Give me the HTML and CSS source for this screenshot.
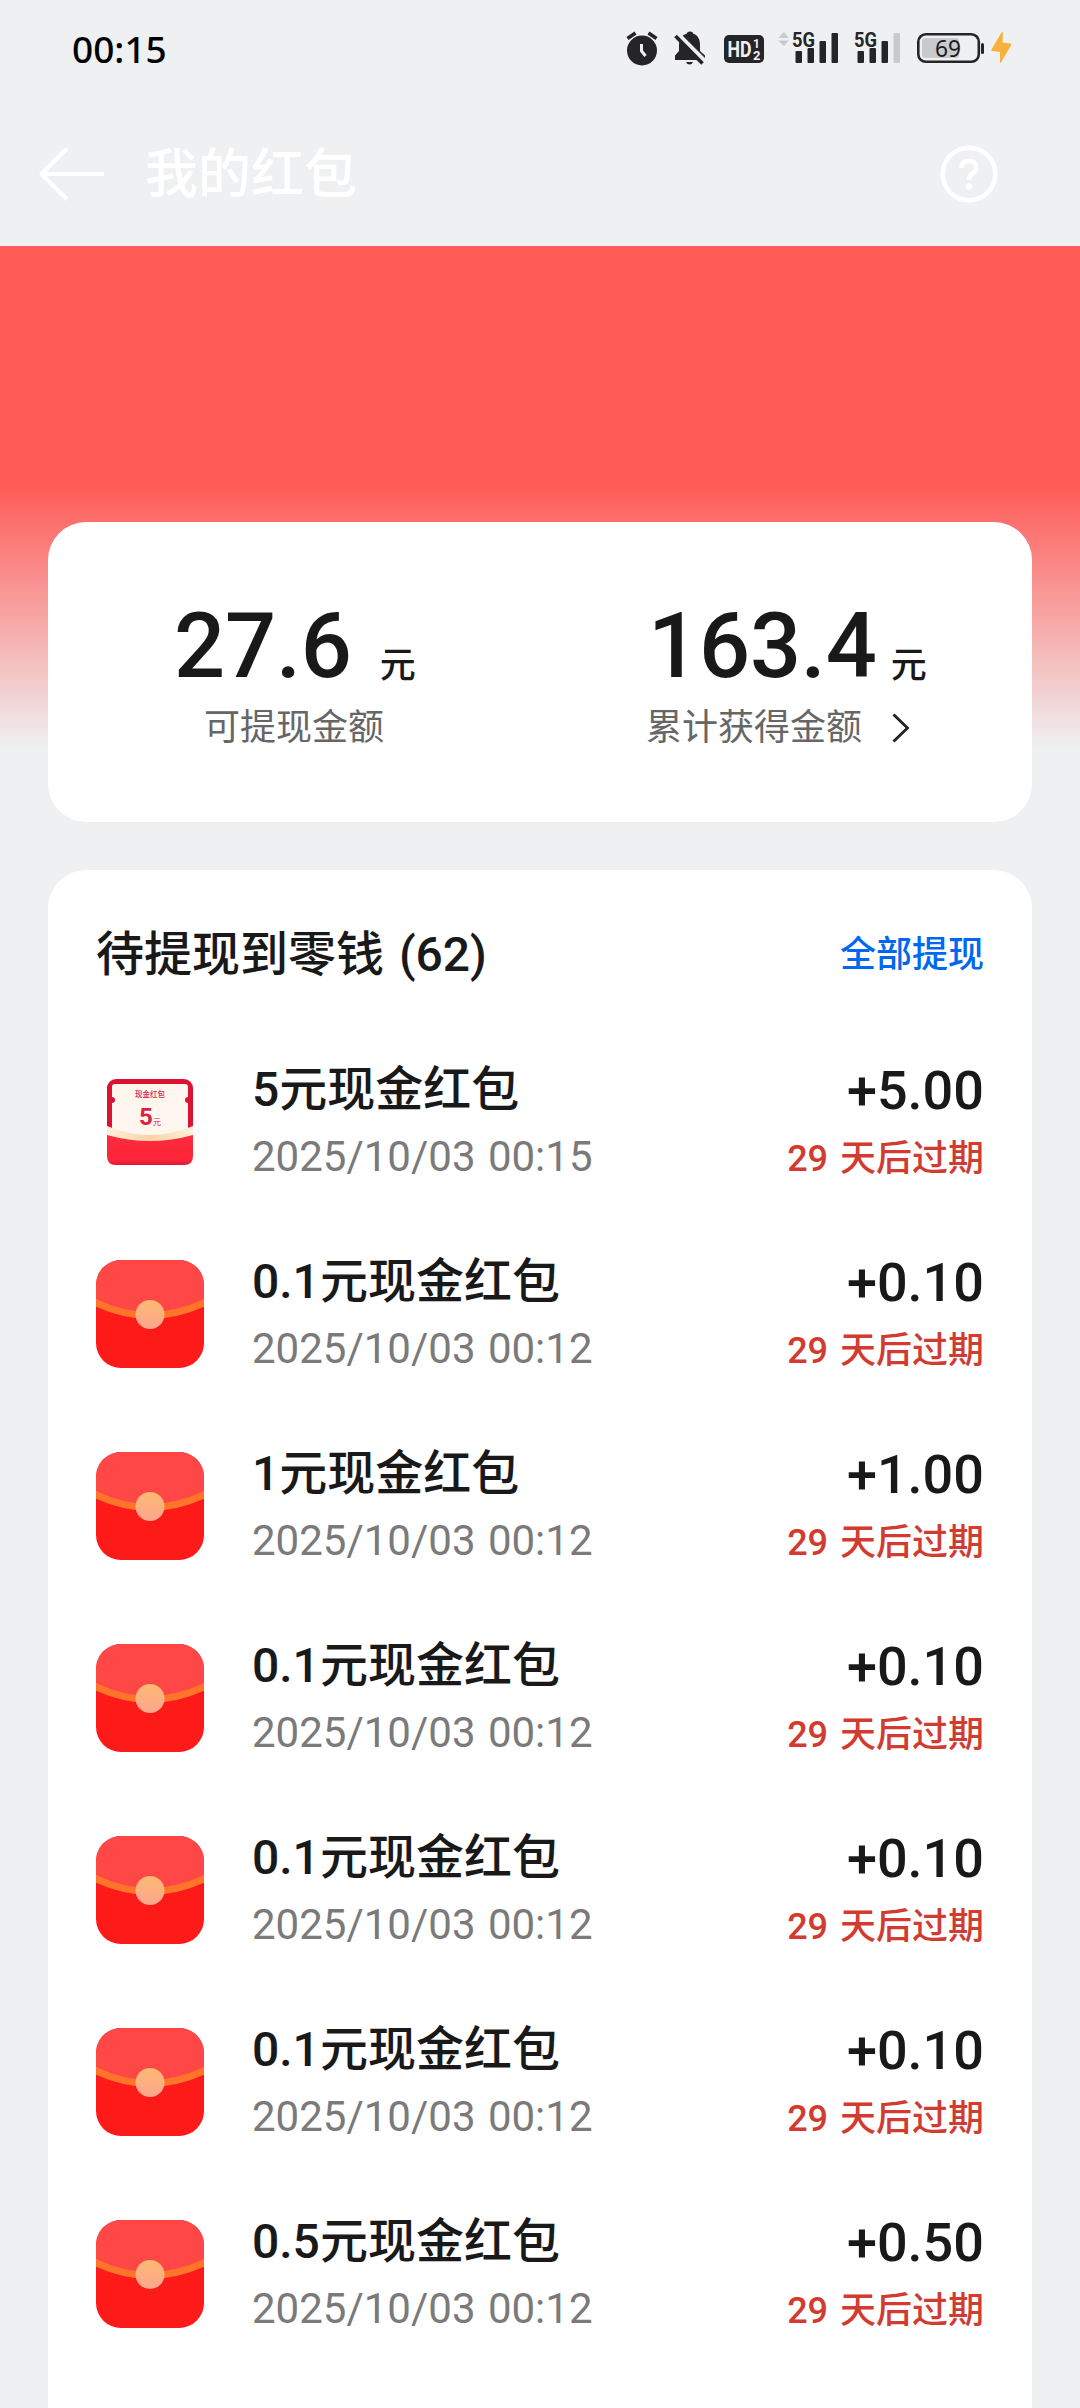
FILE: index.html
```
<!DOCTYPE html>
<html lang="zh-CN">
<head>
<meta charset="utf-8">
<title>我的红包</title>
<link rel="stylesheet" href="styles.css">
</head>
<body>
<svg class="defs" aria-hidden="true">
  <defs>
    <linearGradient id="coin" x1="0" y1="0" x2="0" y2="1">
      <stop offset="0" stop-color="#ffba70"/>
      <stop offset="1" stop-color="#fba690"/>
    </linearGradient>
    <clipPath id="tile"><rect width="108" height="108" rx="25"/></clipPath>
    <symbol id="envelope" viewBox="0 0 108 108">
      <g clip-path="url(#tile)">
        <rect width="108" height="108" fill="#ff1a1a"/>
        <path d="M0 0H108V42Q54 72 0 42Z" fill="#ff4845"/>
        <path d="M-2 42Q54 69 110 42" fill="none" stroke="#ff742b" stroke-width="7"/>
      </g>
      <circle cx="54" cy="54.500" r="14.500" fill="url(#coin)"/>
    </symbol>
  </defs>
</svg>

<header class="top">
  <div class="status">
    <span class="clock">00:15</span>
    <div class="status-icons">
      <svg class="alarm" width="32" height="36" viewBox="0 0 32 36">
        <circle cx="16" cy="20.500" r="15" fill="#252527"/>
        <path d="M1.500 8.500L9.500 3M30.500 8.500L22.500 3" stroke="#252527" stroke-width="3.600"/>
        <path d="M15.500 14V21L19.500 26" fill="none" stroke="#eff0f2" stroke-width="3"/>
      </svg>
      <svg class="bell" width="32" height="36" viewBox="0 0 32 36">
        <path d="M13 3.500Q13 1.500 16 1.500Q19 1.500 19 3.500Q26 6 26 14V21L31 25.500V30H1V25.500L5 21V14Q5 6 13 3.500Z" fill="#252527"/>
        <path d="M12 32H19Q18 34.500 15.500 34.500Q13 34.500 12 32Z" fill="#252527"/>
        <path d="M4 4L32 32" stroke="#eff0f2" stroke-width="4"/>
        <path d="M1.500 6L28.500 33.500" stroke="#252527" stroke-width="3.600"/>
      </svg>
      <svg class="hd" width="40" height="36" viewBox="0 0 40 36">
        <rect y="5" width="40" height="28" rx="5" fill="#252527"/>
        <g fill="#eff0f2" font-family="Roboto, sans-serif" font-weight="700">
          <text x="3.500" y="27.200" font-size="22.500" textLength="24" lengthAdjust="spacingAndGlyphs">HD</text>
          <text x="29" y="18" font-size="12">1</text>
          <text x="29" y="29.500" font-size="13">2</text>
        </g>
      </svg>
      <svg class="signal" width="61" height="36" viewBox="0 0 61 36">
        <path d="M0 8L6 2L11 8ZM0 10.500H11L6 16Z" fill="#c9cacc"/>
        <text x="14" y="16.500" font-family="Roboto, sans-serif" font-weight="700" font-size="21" fill="#252527" textLength="23" lengthAdjust="spacingAndGlyphs">5G</text>
        <g fill="#252527">
          <rect x="17.500" y="21" width="6.500" height="12" rx="1"/>
          <rect x="29.500" y="18" width="6.500" height="15" rx="1"/>
          <rect x="41.500" y="11" width="6.500" height="22" rx="1"/>
          <rect x="53.500" y="3" width="6.500" height="30" rx="1"/>
        </g>
      </svg>
      <svg class="signal-two" width="48" height="36" viewBox="0 0 48 36">
        <text x="0" y="16.500" font-family="Roboto, sans-serif" font-weight="700" font-size="21" fill="#252527" textLength="23" lengthAdjust="spacingAndGlyphs">5G</text>
        <g fill="#252527">
          <rect x="3.500" y="21" width="6.500" height="12" rx="1"/>
          <rect x="15.500" y="18" width="6.500" height="15" rx="1"/>
          <rect x="27.500" y="11" width="6.500" height="22" rx="1"/>
          <rect x="39.500" y="3" width="6.500" height="30" rx="1" fill="#c9cacc"/>
        </g>
      </svg>
      <svg class="battery" width="68" height="36" viewBox="0 0 68 36">
        <rect x="1.300" y="4.300" width="60.500" height="27.500" rx="7.500" fill="none" stroke="#252527" stroke-width="2.600"/>
        <rect x="5" y="8" width="37" height="20" rx="3" fill="#c9cacc"/>
        <rect x="64" y="13" width="3" height="11" rx="1.500" fill="#252527"/>
        <text x="31" y="27" text-anchor="middle" font-family="'Noto Sans', sans-serif" font-size="24" fill="#1b1b1d" textLength="26" lengthAdjust="spacingAndGlyphs">69</text>
      </svg>
      <svg class="bolt" width="22" height="36" viewBox="0 0 22 36">
        <path d="M10.500 2.500Q12 1.500 12 3L11.500 12.500L19.500 13.500Q21 14 20 15.500L10 32.500Q9 33.500 9 32V22L1 21Q0 20.500 .5 19.500Z" fill="#f9b03c"/>
      </svg>
    </div>
  </div>
  <nav class="nav">
    <svg width="66" height="54" viewBox="0 0 66 54" fill="none" stroke="#fff" stroke-width="4.200" stroke-linejoin="round">
      <path d="M28 1.500L2.500 27L28 52.500M2.500 27H65"/>
    </svg>
    <h1 class="nav-title">我的红包</h1>
    <svg width="58" height="58" viewBox="0 0 58 58" fill="none" stroke="#fff" stroke-width="4.400">
      <circle cx="29" cy="29" r="26.300"/>
      <path d="M21.500 23Q21.500 16 29 16Q36 16 36 22.500Q36 26 32.500 28.500Q29 31 29 35"/>
      <circle cx="29" cy="41.500" r="3.300" fill="#fff" stroke="none"/>
    </svg>
  </nav>
</header>

<main class="main">
  <section class="card summary">
    <div class="total">
      <p class="total-value">27.6<span class="unit unit-wide">元</span></p>
      <p class="total-label">可提现金额</p>
    </div>
    <div class="total total-earned">
      <p class="total-value">163.4<span class="unit">元</span></p>
      <p class="total-label">累计获得金额
        <svg class="chevron" width="18" height="30" viewBox="0 0 18 30" fill="none" stroke="#222" stroke-width="2.800">
          <path d="M1.500 1.500L15.500 15L1.500 28.500"/>
        </svg>
      </p>
    </div>
  </section>

  <section class="card list">
    <div class="list-head">
      <h2 class="list-title">待提现到零钱 (62)</h2>
      <a class="withdraw">全部提现</a>
    </div>
    <ul class="rows">
      <li class="row">
        <svg class="icon" viewBox="0 0 108 108">
          <defs>
            <linearGradient id="pocket" x1="0" y1="0" x2="0" y2="1">
              <stop offset="0" stop-color="#ff2b3f"/><stop offset=".85" stop-color="#fc2439"/><stop offset="1" stop-color="#d41c38"/>
            </linearGradient>
            <linearGradient id="fold" x1="0" y1="0" x2="1" y2="0">
              <stop offset="0" stop-color="#fff0dc"/><stop offset=".5" stop-color="#f8d3a4"/><stop offset="1" stop-color="#fff0dc"/>
            </linearGradient>
          </defs>
          <rect x="11" y="11" width="86" height="80" rx="9" fill="#dc1233"/>
          <path d="M19 16H89Q92 16 92 19V29A3 3 0 0 0 92 35V75H16V35A3 3 0 0 0 16 29V19Q16 16 19 16Z" fill="#fff6ef"/>
          <path d="M11 58Q54 76 97 58V75H11Z" fill="url(#fold)"/>
          <path d="M11 67Q54 79 97 67V88Q97 97 88 97H20Q11 97 11 88Z" fill="url(#pocket)"/>
          <g fill="#da2343" font-family="Roboto, 'Noto Sans CJK SC', sans-serif">
            <text x="54" y="28.500" font-size="7.500" font-weight="500" text-anchor="middle">现金红包</text>
            <text x="43" y="57" font-size="24" font-weight="700">5</text>
            <text x="57" y="56.500" font-size="8">元</text>
          </g>
        </svg>
        <div class="info"><p class="name">5元现金红包</p><p class="date">2025/10/03 00:15</p></div>
        <div class="value"><p class="amount">+5.00</p><p class="expiry">29 天后过期</p></div>
      </li>
      <li class="row">
        <svg class="icon"><use href="#envelope"/></svg>
        <div class="info"><p class="name">0.1元现金红包</p><p class="date">2025/10/03 00:12</p></div>
        <div class="value"><p class="amount">+0.10</p><p class="expiry">29 天后过期</p></div>
      </li>
      <li class="row">
        <svg class="icon"><use href="#envelope"/></svg>
        <div class="info"><p class="name">1元现金红包</p><p class="date">2025/10/03 00:12</p></div>
        <div class="value"><p class="amount">+1.00</p><p class="expiry">29 天后过期</p></div>
      </li>
      <li class="row">
        <svg class="icon"><use href="#envelope"/></svg>
        <div class="info"><p class="name">0.1元现金红包</p><p class="date">2025/10/03 00:12</p></div>
        <div class="value"><p class="amount">+0.10</p><p class="expiry">29 天后过期</p></div>
      </li>
      <li class="row">
        <svg class="icon"><use href="#envelope"/></svg>
        <div class="info"><p class="name">0.1元现金红包</p><p class="date">2025/10/03 00:12</p></div>
        <div class="value"><p class="amount">+0.10</p><p class="expiry">29 天后过期</p></div>
      </li>
      <li class="row">
        <svg class="icon"><use href="#envelope"/></svg>
        <div class="info"><p class="name">0.1元现金红包</p><p class="date">2025/10/03 00:12</p></div>
        <div class="value"><p class="amount">+0.10</p><p class="expiry">29 天后过期</p></div>
      </li>
      <li class="row">
        <svg class="icon"><use href="#envelope"/></svg>
        <div class="info"><p class="name">0.5元现金红包</p><p class="date">2025/10/03 00:12</p></div>
        <div class="value"><p class="amount">+0.50</p><p class="expiry">29 天后过期</p></div>
      </li>
    </ul>
  </section>
</main>
</body>
</html>
```
FILE: styles.css
```
* { box-sizing: border-box; margin: 0; padding: 0; }

body {
  width: 1080px;
  height: 2408px;
  overflow: hidden;
  display: flex;
  flex-direction: column;
  background: #eff0f2;
  color: #191919;
  font-family: Roboto, "Noto Sans CJK SC", sans-serif;
}

svg { display: block; flex: none; overflow: visible; }
.defs { position: absolute; width: 0; height: 0; }

.top { height: 246px; flex: none; }
.status {
  height: 102px;
  padding: 30px 67px 0 72px;
  display: flex;
  justify-content: space-between;
  align-items: flex-start;
}
.clock {
  font-family: "Noto Sans", sans-serif;
  font-size: 37px;
  font-weight: 500;
  line-height: 37px;
  color: #000;
}
.status-icons { display: flex; }
.bell { margin-left: 16px; }
.hd { margin-left: 18px; }
.signal { margin-left: 14px; }
.signal-two { margin-left: 15px; }
.battery { margin-left: 15px; }
.bolt { margin-left: 6px; }

.nav {
  height: 144px;
  padding: 0 82px 0 39px;
  display: flex;
  align-items: center;
  color: #fff;
}
.nav-title {
  flex: 1;
  margin: 2px 0 0 40px;
  font-size: 53px;
  line-height: 72px;
  font-weight: 500;
}

.main {
  flex: 1;
  padding: 276px 48px 0;
  display: flex;
  flex-direction: column;
  gap: 48px;
  background: linear-gradient(#ff5b57 0, #ff5b57 240px, #eff0f2 502px);
}
.card { background: #fff; border-radius: 38px; }

.summary {
  height: 300px;
  flex: none;
  padding-top: 76px;
  display: grid;
  grid-template-columns: 1fr 1fr;
}
.total { padding-left: 126px; }
.total-earned { padding-left: 108px; }
.total-value {
  height: 99px;
  line-height: 98px;
  font-size: 90px;
  font-weight: 500;
  letter-spacing: -.2px;
  white-space: nowrap;
}
.unit { position: relative; top: 1px; font-size: 36px; margin-left: 14px; }
.unit-wide { margin-left: 28px; }
.total-label {
  display: flex;
  align-items: center;
  margin-left: 30px;
  font-size: 36px;
  line-height: 62px;
  color: #666;
}
.total-earned .total-label { margin-left: -2px; }
.chevron { margin-left: 30px; }

.list { height: 1600px; flex: none; padding: 0 48px; }
.list-head {
  height: 156px;
  padding-top: 13px;
  display: flex;
  align-items: center;
  justify-content: space-between;
}
.list-title { font-size: 48px; font-weight: 500; line-height: 64px; word-spacing: 3px; }
.withdraw { font-size: 36px; font-weight: 500; line-height: 48px; color: #0067f0; }

.rows { list-style: none; }
.row { height: 192px; display: flex; align-items: center; }
.icon { width: 108px; height: 108px; }
.info { flex: 1; margin: 2px 0 0 48px; }
.value { margin-top: 3px; text-align: right; }
.name, .date, .amount, .expiry { height: 67px; line-height: 67px; }
.name { font-size: 48px; font-weight: 500; }
.date { font-size: 42px; color: #7a7a7a; word-spacing: 2px; }
.amount { font-size: 54px; font-weight: 500; }
.expiry { height: 67px; line-height: 71px; font-size: 36px; font-weight: 500; color: #d23b2f; word-spacing: 3px; }
```
